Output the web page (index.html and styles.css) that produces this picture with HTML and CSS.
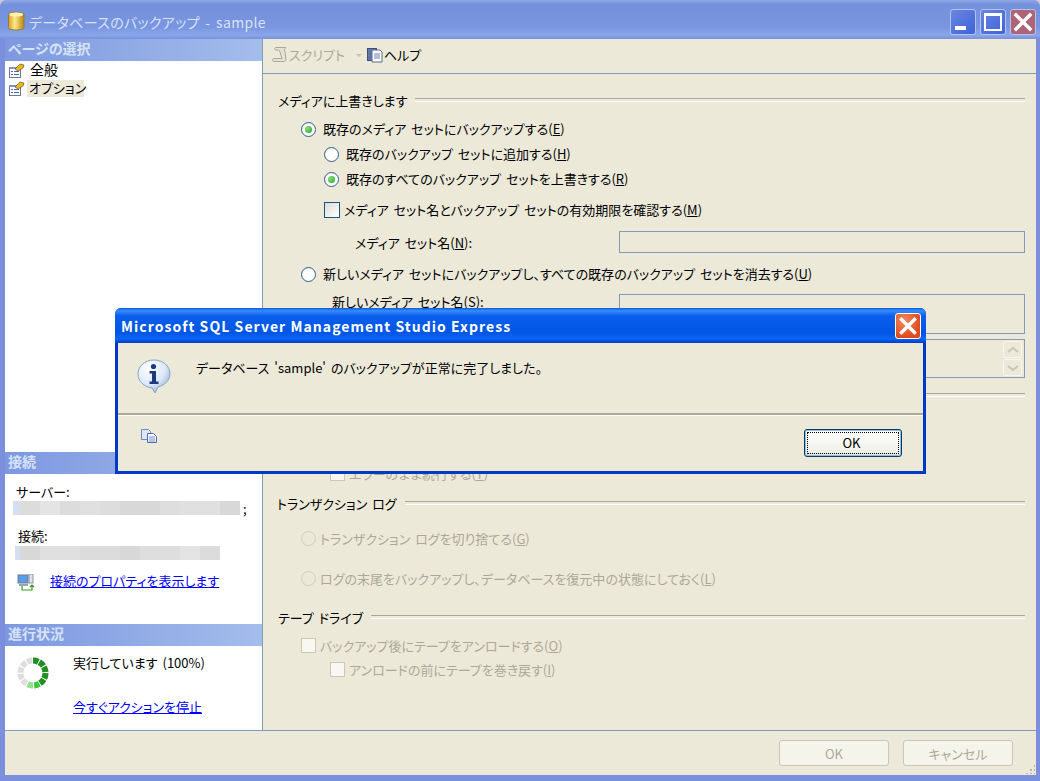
FILE: index.html
```html
<!DOCTYPE html>
<html lang="ja">
<head>
<meta charset="utf-8">
<title>データベースのバックアップ - sample</title>
<link rel="stylesheet" href="styles.css">
</head>
<body>
<div class="window">
  <header class="titlebar">
    <svg class="db-icon" width="18" height="20" viewBox="0 0 18 20">
      <defs><linearGradient id="gold" x1="0" x2="1" y1="0" y2="0"><stop offset="0" stop-color="#d8a020"/><stop offset=".4" stop-color="#ffe98a"/><stop offset="1" stop-color="#b98412"/></linearGradient></defs>
      <path d="M.5 3.500C.5 .5 16 .5 16 3.500V16.500C16 19.800 .5 19.800 .5 16.500Z" fill="url(#gold)" stroke="#9a7a30"/>
      <ellipse cx="8.250" cy="3.500" rx="7" ry="2" fill="#fff2b0"/>
    </svg>
    <span class="title-text">データベースのバックアップ - sample</span>
    <div class="win-buttons">
      <span class="wbtn wbtn-min"><i class="glyph-min"></i></span>
      <span class="wbtn wbtn-max"><i class="glyph-max"></i></span>
      <span class="wbtn wbtn-close">
        <svg width="24" height="24" viewBox="0 0 24 24"><path d="M5 5L19 19M19 5L5 19" stroke="#fff" stroke-width="3.400" stroke-linecap="square"/></svg>
      </span>
    </div>
  </header>

  <div class="main">
    <aside class="side">
      <div class="side-head">ページの選択</div>
      <div class="pages">
        <div class="page-item">
          <svg width="17" height="15" viewBox="0 0 17 15"><rect x="1.500" y="4.500" width="11" height="10" fill="#fff" stroke="#6b7a92"/><path d="M1 4h12v2H1z" fill="#7f94c0"/><path d="M3 8h2v1H3zM6 8h5v1H6zM3 11h2v1H3zM6 11h5v1H6z" fill="#4a68b0"/><path d="M7 6L12 1l4 1-1 3-5 3z" fill="#e8b820" stroke="#6a5a20" stroke-width=".7"/></svg>
          <span class="page-label page-label-plain">全般</span>
        </div>
        <div class="page-item">
          <svg width="17" height="15" viewBox="0 0 17 15"><rect x="1.500" y="4.500" width="11" height="10" fill="#fff" stroke="#6b7a92"/><path d="M1 4h12v2H1z" fill="#7f94c0"/><path d="M3 8h2v1H3zM6 8h5v1H6zM3 11h2v1H3zM6 11h5v1H6z" fill="#4a68b0"/><path d="M7 6L12 1l4 1-1 3-5 3z" fill="#e8b820" stroke="#6a5a20" stroke-width=".7"/></svg>
          <span class="page-label page-label-selected">オプション</span>
        </div>
      </div>

      <div class="side-head">接続</div>
      <div class="conn">
        <div class="conn-server">サーバー:</div>
        <div class="blur-line"><span class="blur blur-server"></span><span class="semi">;</span></div>
        <div class="conn-name">接続:</div>
        <div class="blur blur-conn"></div>
        <div class="conn-link">
          <svg width="18" height="17" viewBox="0 0 18 17"><rect x="1" y="1" width="10" height="8" fill="#5a9ce8" stroke="#6a7a8a"/><rect x="12" y="0" width="4" height="9" fill="#dfe3e8" stroke="#8a94a0"/><rect x="2" y="10" width="9" height="2" fill="#9aa4b0"/><path d="M5 12v4h10v-4M13 13l2-2 2 2" fill="none" stroke="#3a9a20" stroke-width="1.200"/></svg>
          <a class="link" href="#">接続のプロパティを表示します</a>
        </div>
      </div>

      <div class="side-head">進行状況</div>
      <div class="progress">
        <svg class="spinner" width="32" height="32" viewBox="0 0 32 32">
          <g fill="none" stroke-width="6">
            <circle cx="16" cy="16" r="12.500" stroke="#dedede" stroke-dasharray="5.400 1.150"/>
            <circle cx="16" cy="16" r="12.500" stroke="#1f8f1f" stroke-dasharray="5.400 1.150 5.400 1.150 5.400 1.150 5.400 1.150 5.400 1.150 0 100" transform="rotate(-90 16 16)"/>
            <circle cx="16" cy="16" r="12.500" stroke="#3fc43f" stroke-dasharray="5.400 80" transform="rotate(60 16 16)"/>
            <circle cx="16" cy="16" r="12.500" stroke="#90e090" stroke-dasharray="5.400 80" transform="rotate(90 16 16)"/>
          </g>
        </svg>
        <div class="progress-text">
          <div>実行しています (100%)</div>
          <a class="link stop-link" href="#">今すぐアクションを停止</a>
        </div>
      </div>
    </aside>

    <section class="pane">
      <div class="toolbar">
        <span class="tool tool-disabled">
          <svg width="17" height="17" viewBox="0 0 17 17"><path d="M5 1.500h10c-2 1-2 3-1 5l1 7c0 1-1 2-2 2H3c-2 0-2-3 0-3h8L9 6C8.500 4 7 4 5 4 3 4 3 1.500 5 1.500Z" fill="#e4e2d4" stroke="#a8a89c"/></svg>
          スクリプト
          <i class="caret"></i>
        </span>
        <span class="tool">
          <svg width="17" height="17" viewBox="0 0 17 17"><rect x="1.500" y="2.500" width="9" height="12" fill="#5f78a8" stroke="#3d4f78"/><path d="M6 4h8l2 2v10H6z" fill="#fff" stroke="#5a6a8a"/><path d="M8 8h6M8 10h6M8 12h6" stroke="#6a80b0"/></svg>
          ヘルプ
        </span>
      </div>

      <div class="form">
        <div class="legend legend-first"><span>メディアに上書きします</span></div>
        <div class="row row-1 indent-1"><i class="radio radio-on"></i><span>既存のメディア セットにバックアップする(<u>E</u>)</span></div>
        <div class="row indent-2"><i class="radio"></i><span>既存のバックアップ セットに追加する(<u>H</u>)</span></div>
        <div class="row indent-2"><i class="radio radio-on"></i><span>既存のすべてのバックアップ セットを上書きする(<u>R</u>)</span></div>
        <div class="row row-check indent-2"><i class="check"></i><span>メディア セット名とバックアップ セットの有効期限を確認する(<u>M</u>)</span></div>
        <div class="field field-name">
          <span class="field-label label-far">メディア セット名(<u>N</u>):</span>
          <div class="input input-name"></div>
        </div>
        <div class="row row-new indent-1"><i class="radio"></i><span>新しいメディア セットにバックアップし、すべての既存のバックアップ セットを消去する(<u>U</u>)</span></div>
        <div class="field field-new">
          <span class="field-label label-near">新しいメディア セット名(<u>S</u>):</span>
          <div class="input input-new"></div>
        </div>
        <div class="field field-desc">
          <span class="field-label label-near">新しいメディア セットの説明(<u>D</u>):</span>
          <div class="input input-desc">
            <span class="spin"><svg width="12" height="8" viewBox="0 0 12 8"><path d="M1 6l5-4 5 4" fill="none" stroke="#c6c6bc" stroke-width="2"/></svg></span>
            <span class="spin"><svg width="12" height="8" viewBox="0 0 12 8"><path d="M1 2l5 4 5-4" fill="none" stroke="#c6c6bc" stroke-width="2"/></svg></span>
          </div>
        </div>

        <div class="legend legend-rel"><span>信頼性</span></div>
        <div class="row row-rel indent-1"><i class="check"></i><span>完了時にバックアップを検証する(<u>V</u>)</span></div>
        <div class="row indent-1"><i class="check"></i><span>メディアに書き込む前にチェックサムを実行する(<u>F</u>)</span></div>
        <div class="row row-cont indent-3 off"><i class="check check-off"></i><span>エラーのまま続行する(<u>T</u>)</span></div>

        <div class="legend legend-log"><span>トランザクション ログ</span></div>
        <div class="row row-log indent-1 off"><i class="radio radio-off"></i><span>トランザクション ログを切り捨てる(<u>G</u>)</span></div>
        <div class="row row-log2 indent-1 off"><i class="radio radio-off"></i><span>ログの末尾をバックアップし、データベースを復元中の状態にしておく(<u>L</u>)</span></div>

        <div class="legend legend-tape"><span>テープ ドライブ</span></div>
        <div class="row row-tape indent-1 off"><i class="check check-off"></i><span>バックアップ後にテープをアンロードする(<u>O</u>)</span></div>
        <div class="row row-tape2 indent-3 off"><i class="check check-off"></i><span>アンロードの前にテープを巻き戻す(<u>I</u>)</span></div>
      </div>
    </section>
  </div>

  <footer class="footer">
    <button class="btn" disabled>OK</button>
    <button class="btn" disabled>キャンセル</button>
    <i class="grip"></i>
  </footer>
</div>

<div class="dialog">
  <div class="dlg-title">
    <span>Microsoft SQL Server Management Studio Express</span>
    <span class="dlg-close"><svg width="22" height="22" viewBox="0 0 22 22"><path d="M4.500 4.500L17.500 17.500M17.500 4.500L4.500 17.500" stroke="#fff" stroke-width="3.400" stroke-linecap="square"/></svg></span>
  </div>
  <div class="dlg-body">
    <div class="dlg-message">
      <svg width="34" height="34" viewBox="0 0 34 34">
        <defs><radialGradient id="bub" cx=".35" cy=".25" r=".9"><stop offset="0" stop-color="#fff"/><stop offset=".55" stop-color="#dbe8f8"/><stop offset="1" stop-color="#7fa2d0"/></radialGradient></defs>
        <path d="M17 1C8 1 1 7 1 15c0 7 6 13 14 14l3 5 3-6c7-2 12-7 12-13C33 7 26 1 17 1Z" fill="url(#bub)" stroke="#8aa4c8"/>
        <circle cx="16.500" cy="7.500" r="2.600" fill="#1c3a80"/>
        <path d="M12.500 12h6.500v10.500h2.500v2.500h-9v-2.500h2.500V14.500h-2.500z" fill="#1c3a80"/>
      </svg>
      <span>データベース 'sample' のバックアップが正常に完了しました。</span>
    </div>
    <div class="dlg-actions">
      <svg width="16" height="14" viewBox="0 0 16 14"><path d="M0.500 0.500h7l2 2v8h-9z" fill="#dfe6f6" stroke="#7088c0"/><path d="M6.500 4.500h6l3 3v6h-9z" fill="#fff" stroke="#4a68b0"/><path d="M8 8h6M8 10h6M8 12h6" stroke="#6a88c8"/></svg>
      <button class="btn-ok"><span class="ok-label">OK</span></button>
    </div>
  </div>
</div>
</body>
</html>
```
FILE: styles.css
```css
* { box-sizing: border-box; }
html, body { margin: 0; padding: 0; }
body {
  width: 1040px;
  height: 781px;
  overflow: hidden;
  position: relative;
  background: #c8ccd8;
  font-family: "Noto Sans CJK JP", "Liberation Sans", sans-serif;
  font-size: 13px;
  font-weight: 400;
  font-feature-settings: "palt";
  word-spacing: 2px;
  color: #000;
}
u { text-decoration: underline; }

.window {
  width: 1040px;
  height: 781px;
  display: flex;
  flex-direction: column;
  background: #7b8fdc;
  border-radius: 7px 7px 0 0;
  padding: 0 4px 6px 5px;
}

/* Title bar */
.titlebar {
  height: 39px;
  margin: 0 -4px 0 -5px;
  padding: 0 4px 0 8px;
  display: flex;
  align-items: center;
  border-radius: 7px 7px 0 0;
  background: linear-gradient(180deg, #8ea8e6 0, #7590dc 12%, #7a96e0 70%, #8aa6ea 90%, #7b90dc 100%);
}
.db-icon { flex: none; margin-top: 3px; }
.title-text {
  margin-left: 3px;
  margin-top: 4px;
  font-size: 14px;
  letter-spacing: .35px;
  word-spacing: 2px;
  color: #d8e2f8;
  white-space: pre;
  line-height: 20px;
}
.win-buttons { margin-left: auto; display: flex; gap: 4px; }
.wbtn {
  width: 26px;
  height: 26px;
  margin-top: 4px;
  border: 1px solid #b4c4ee;
  border-radius: 3px;
  display: flex;
  align-items: center;
  justify-content: center;
  position: relative;
  background: linear-gradient(135deg, #6a86e0, #3f62dc);
}
.wbtn-close { background: #ac6476; }
.glyph-min { position: absolute; left: 4px; bottom: 4px; width: 11px; height: 4px; background: #fff; }
.glyph-max { width: 18px; height: 18px; border: 2px solid #fff; border-top-width: 3px; display: block; }

.main { flex: 1; display: flex; min-height: 0; border-bottom: 1px solid #7f9db9; background: #ece9d8; }

/* Side */
.side { width: 258px; flex: none; display: flex; flex-direction: column; background: #fff; border-right: 1px solid #7f9db9; }
.side-head {
  height: 22px;
  flex: none;
  padding-left: 3px;
  line-height: 19px;
  font-size: 14px;
  font-weight: 700;
  color: #d6e2f8;
  background: linear-gradient(90deg, #7d98e0, #a4bdec);
}
.pages { height: 391px; flex: none; padding-top: 0; }
.page-item { height: 18px; display: flex; align-items: center; padding-left: 3px; white-space: nowrap; }
.page-label { line-height: 17px; }
.page-label-plain { margin: 0 0 2px 5px; font-size: 14px; }
.page-label-selected { margin: 0 0 0 2px; padding: 0 2px 1px; height: 17px; line-height: 15px; width: 57px; background: #ece9d8; }

.conn { height: 150px; flex: none; position: relative; display: flex; flex-direction: column; }
.conn-server { margin: 9px 0 0 11px; height: 18px; line-height: 17px; }
.blur-line { display: flex; align-items: center; margin-left: 8px; height: 14px; margin-top: 0; }
.semi { margin-left: 3px; }
.blur { display: block; height: 14px; }
.blur-server {
  width: 227px;
  background: linear-gradient(90deg, #d6dff2 0 7px, #dcdcdc 7px 27px, #e4e4e4 27px 47px, #dcdcdc 47px 67px, #e0e0e0 67px 87px, #dddddd 87px 107px, #d8d8d8 107px 147px, #dedede 147px 167px, #e0e0e0 167px 207px, #d8d8d8 207px);
}
.conn-name { margin: 12px 0 0 13px; height: 18px; line-height: 17px; }
.blur-conn {
  width: 205px;
  margin: 1px 0 0 10px;
  background: linear-gradient(90deg, #d6dff2 0 5px, #d8d8d8 5px 25px, #e0e0e0 25px 65px, #dcdcdc 65px 105px, #d8d8d8 105px 125px, #dedede 125px 165px, #e4e4e4 165px 185px, #dcdcdc 185px);
}
.conn-link { display: flex; align-items: center; margin: 13px 0 0 12px; height: 18px; }
.link { color: #0000ff; text-decoration: underline; }
.conn-link .link { margin: 0 0 2px 15px; line-height: 16px; }

.progress { flex: 1; display: flex; padding: 8px 0 0 12px; }
.spinner { margin-top: 3px; flex: none; }
.progress-text { margin-left: 24px; line-height: 18px; }
.stop-link { display: block; margin-top: 26px; }

/* Right pane */
.pane { flex: 1; min-width: 0; display: flex; flex-direction: column; }
.toolbar { height: 35px; flex: none; display: flex; align-items: center; padding: 0 0 3px 8px; gap: 4px; border-bottom: 1px solid #7f9db9; }
.tool { display: flex; align-items: center; gap: 1px; }
.tool-disabled { color: #aca899; }
.caret { margin-left: 10px; border: 3px solid transparent; border-top-color: #c4c2b4; margin-top: 4px; }

.form { flex: 1; padding: 0 11px 0 15px; display: flex; flex-direction: column; }
.legend { height: 20px; flex: none; display: flex; align-items: center; gap: 8px; }
.legend::after { content: ""; flex: 1; height: 2px; border-top: 1px solid #aca899; border-bottom: 1px solid #fff; }
.legend-first { margin-top: 16px; }
.legend-rel { margin-top: 7px; }
.legend-log { margin-top: 8px; margin-left: -1px; }
.legend-tape { margin-top: 17px; }

.row { height: 24px; margin-top: 1px; flex: none; display: flex; align-items: center; white-space: nowrap; }
.row > span { margin-bottom: 2px; }
.row.off > span { margin-bottom: 0; }
.row-1 { margin-top: 7px; }
.row-check { margin-top: 7px; }
.row-new { margin-top: 9px; }
.row-rel { margin-top: 6px; }
.row-log { margin-top: 13px; }
.row-log2 { margin-top: 16px; }
.row-tape { margin-top: 6px; }
.row-tape2 { margin-top: 0; }
.indent-1 { padding-left: 23px; }
.indent-2 { padding-left: 46px; }
.indent-3 { padding-left: 52px; }
.off { color: #aca899; }

.radio {
  width: 15px; height: 15px; flex: none; margin-right: 7px;
  border-radius: 50%;
  border: 1px solid #2f5f8f;
  background: radial-gradient(circle at 60% 60%, #fff 55%, #dcd8c8);
  position: relative;
}
.radio-on::after {
  content: ""; position: absolute; left: 3px; top: 3px; width: 7px; height: 7px; border-radius: 50%;
  background: radial-gradient(circle at 35% 35%, #7fe27f, #1fa31f);
}
.radio-off { border-color: #d0cec0; background: #ece9d8; margin-right: 4px; }
.check {
  width: 16px; height: 16px; flex: none; margin-right: 4px;
  border: 1px solid #1c5180;
  background: linear-gradient(135deg, #dcdcd6, #fff);
}
.check-off { width: 15px; height: 15px; border-color: #cbc8b8; background: #f8f7f2; }

.field { display: flex; flex: none; position: relative; }
.field-label { width: 0; white-space: nowrap; flex: none; }
.label-far { margin-left: 77px; margin-top: 2px; }
.label-near { margin-left: 54px; }
.field-new .label-near { margin-top: -2px; }
.input { width: 406px; flex: none; border: 1px solid #7f9db9; position: absolute; left: 341px; top: 0; }
.field-name { height: 22px; margin-top: 9px; }
.input-name { height: 22px; }
.field-new { height: 40px; margin-top: 8px; }
.input-new { height: 40px; }
.field-desc { height: 39px; margin-top: 5px; }
.input-desc { height: 39px; display: flex; flex-direction: column; align-items: flex-end; padding: 1px 2px 0 0; gap: 0; }
.spin {
  width: 19px; height: 17px; border: 1px solid #f6f5ee; border-radius: 2px; background: #ece9d8;
  display: flex; align-items: center; justify-content: center; margin-bottom: 1px;
}

/* Footer */
.footer { height: 44px; flex: none; background: #ece9d8; display: flex; justify-content: flex-end; align-items: center; gap: 14px; padding: 0 23px 0 0; position: relative; }
.btn {
  width: 110px; height: 26px;
  font: inherit; font-size: 13px;
  color: #aca899;
  background: #f5f4ea;
  border: 1px solid #c9c7ba;
  border-radius: 3px;
}
.grip {
  position: absolute; right: 1px; bottom: 1px; width: 10px; height: 10px;
  background: radial-gradient(circle, #b8b5a4 1px, transparent 1.2px) 0 0 / 4px 4px;
  clip-path: polygon(100% 0, 100% 100%, 0 100%);
}

/* Dialog */
.dialog {
  position: absolute;
  left: 115px; top: 308px;
  width: 811px; height: 166px;
  background: #0038c8;
  border-radius: 6px 6px 0 0;
  padding: 0 3px 3px 3px;
  display: flex; flex-direction: column;
}
.dlg-title {
  height: 35px; flex: none;
  margin: 0 -3px;
  padding: 0 5px 0 6px;
  border-radius: 6px 6px 0 0;
  display: flex; align-items: center; justify-content: space-between;
  font-size: 14px; font-weight: 700; letter-spacing: 1.05px; word-spacing: 0;
  color: #fff;
  white-space: nowrap;
  background: linear-gradient(180deg, #0a5ae8 0, #3a8cf8 8%, #0a60ec 22%, #0055e4 70%, #0a66f2 88%, #003cc8 100%);
}
.dlg-close {
  width: 26px; height: 26px; border: 1px solid #fff; border-radius: 3px;
  display: flex; align-items: center; justify-content: center;
  background: radial-gradient(circle at 35% 30%, #f08a60, #e04a1e 70%);
}
.dlg-body { flex: 1; background: #ece9d8; display: flex; flex-direction: column; }
.dlg-message { height: 72px; flex: none; display: flex; padding: 16px 0 0 19px; border-bottom: 2px solid #aca899; box-shadow: 0 1px 0 #fff; }
.dlg-message span { margin-left: 25px; line-height: 18px; margin-top: 0; }
.dlg-actions { flex: 1; display: flex; justify-content: space-between; padding: 14px 21px 0 23px; align-items: flex-start; }
.btn-ok {
  width: 98px; height: 28px; padding: 2px;
  font: inherit; font-size: 13px;
  border: 1px solid #003c74; border-radius: 3px;
  background: linear-gradient(180deg, #fff, #f0f0ea 85%, #dcdcd4);
  box-shadow: inset 0 0 0 1px #9ab8d8;
}
.ok-label { display: flex; align-items: center; justify-content: center; height: 100%; padding: 0 3px 2px 0; outline: 1px dotted #000; outline-offset: -1px; }
```
